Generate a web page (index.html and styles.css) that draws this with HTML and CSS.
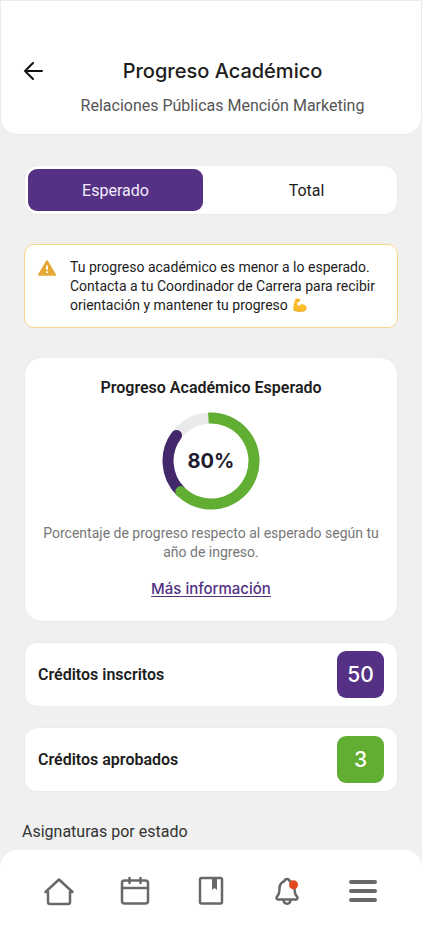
FILE: index.html
```html
<!DOCTYPE html>
<html lang="es">
<head>
<meta charset="utf-8">
<meta name="viewport" content="width=device-width, initial-scale=1">
<title>Progreso Académico</title>
<link rel="stylesheet" href="styles.css">
</head>
<body>
<header class="header">
  <button class="back" type="button" aria-label="Volver">
    <svg width="24" height="24" viewBox="0 0 24 24"><path d="M20 12H3M11 4L3 12l8 8"/></svg>
  </button>
  <h1 class="title">Progreso Académico</h1>
  <p class="subtitle">Relaciones Públicas Mención Marketing</p>
</header>

<main class="content">
  <div class="tabs">
    <button class="tab tab-active" type="button" aria-pressed="true">Esperado</button>
    <button class="tab" type="button" aria-pressed="false">Total</button>
  </div>

  <div class="alert">
    <svg class="alert-icon" width="18" height="16" viewBox="0 0 18 16"><path class="tri" d="M9 1.2 17 14.8H1z"/><path class="mark" d="M9 5.5v4.2M9 11.2v1.8"/></svg>
    <p class="alert-text">Tu progreso académico es menor a lo esperado. Contacta a tu Coordinador de Carrera para recibir orientación y mantener tu progreso
      <svg class="arm" width="14" height="14" viewBox="0 0 28 28"><path fill="#f9bd2c" d="M5 2c3-2 7-1 9 1 1 2 0 4-2 5l-3 .5c-1 3 .5 6 2.500 8 3-4 8-5 12-2.500 4 2.500 5 7 2.500 10-3 3.500-8 3-13 3-5 0-10 0-12-3C-.5 20 2 8 5 2z"/><path fill="none" stroke="#e59a1c" stroke-width="1.500" d="M8 4c2 1 4 1 5-1M11 16.500c0 2 .5 3 2 4M2 24c4 3 18 4 23 0"/></svg></p>
  </div>

  <section class="card">
    <h2 class="card-title">Progreso Académico Esperado</h2>
    <div class="ring">
      <svg width="98" height="98" viewBox="0 0 98 98">
        <circle class="track" cx="49" cy="49" r="43"/>
        <path class="arc arc-enrolled" d="M18.600 79.400A43 43 0 0 1 14.500 23.400"/>
        <path class="arc arc-approved" d="M46.400 6.100A43 43 0 1 1 18.600 79.400"/>
        <circle class="cap" cx="18.600" cy="79.400" r="5.300"/>
      </svg>
      <strong class="percent">80%</strong>
    </div>
    <p class="note">Porcentaje de progreso respecto al esperado según tu año de ingreso.</p>
    <a class="more" href="#">Más información</a>
  </section>

  <div class="credit"><span class="credit-label">Créditos inscritos</span><span class="badge badge-purple">50</span></div>
  <div class="credit"><span class="credit-label">Créditos aprobados</span><span class="badge badge-green">3</span></div>

  <h2 class="section-title">Asignaturas por estado</h2>
</main>

<nav class="nav">
  <a href="#" aria-label="Inicio"><svg width="32" height="32" viewBox="0 0 32 32"><path d="M5 17H2.500L16 4.500 29.500 17H27v10a2 2 0 0 1-2 2H7a2 2 0 0 1-2-2z"/></svg></a>
  <a href="#" aria-label="Calendario"><svg width="32" height="32" viewBox="0 0 32 32"><rect x="3" y="5.500" width="26" height="23" rx="2.500"/><path d="M3 13h26M10.500 3v5M21.500 3v5"/></svg></a>
  <a href="#" aria-label="Cursos"><svg width="32" height="32" viewBox="0 0 32 32"><rect x="5" y="3" width="22" height="25.500" rx="1.500"/><path class="solid" d="M17 3h5v12l-2.500-2-2.500 2z"/></svg></a>
  <a href="#" aria-label="Notificaciones"><svg width="32" height="32" viewBox="0 0 32 32"><path d="M13.500 6a2.600 2.600 0 0 1 5 0C22 7.500 23.500 10 23.500 13.500c0 4 .3 6 2.500 8 1 1.300.5 3-1 3H7c-1.500 0-2-1.700-1-3 2.200-2 2.500-4 2.500-8C8.500 10 10 7.500 13.500 6zM12.500 24.500c0 5.500 7 5.500 7 0"/><circle class="dot" cx="22.500" cy="9.700" r="4.500"/></svg></a>
  <a href="#" aria-label="Menú"><svg width="32" height="32" viewBox="0 0 32 32"><path class="bars" d="M4 7h24M4 16h24M4 25h24"/></svg></a>
</nav>
</body>
</html>
```
FILE: styles.css
```css
* { box-sizing: border-box; }
h1, h2, p { margin: 0; }
button { border: 0; padding: 0; background: none; font: inherit; color: inherit; }

body {
  margin: 0;
  min-height: 100vh;
  display: flex;
  flex-direction: column;
  background: #f0f0f0;
  color: #1d1d1d;
  font-family: Roboto, "Liberation Sans", sans-serif;
  font-size: 16px;
}

.header {
  display: grid;
  grid-template-columns: 24px 1fr;
  row-gap: 9px;
  align-items: center;
  padding: 56px 22px 16px 21px;
  background: #fff;
  border: 1px solid #ebebeb;
  border-radius: 0 0 18px 18px;
  text-align: center;
}
.back { height: 24px; }
.back svg { display: block; fill: none; stroke: #111; stroke-width: 2; stroke-linecap: round; stroke-linejoin: round; }
.title { font: 500 20px/28px Inter, sans-serif; }
.subtitle { grid-column: 2; color: #555; line-height: 24px; }

.content { flex: 1; display: flex; flex-direction: column; padding: 30px 24px 6px; }

.tabs {
  display: grid;
  grid-template-columns: 1fr 1fr;
  column-gap: 16px;
  padding: 3px;
  background: #fff;
  border: 1px solid #ebebeb;
  border-radius: 14px;
}
.tab { height: 42px; border-radius: 9px; }
.tab-active { background: #543185; color: #f2ecfa; }

.alert {
  display: flex;
  gap: 14px;
  margin-top: 29px;
  padding: 13px 16px 12px 13px;
  background: #fff;
  border: 1px solid #fbd58a;
  border-radius: 10px;
}
.alert-icon { flex: none; margin-top: 2px; }
.tri { fill: #e5a835; stroke: #e5a835; stroke-width: 2; stroke-linejoin: round; }
.mark { stroke: #fff; stroke-width: 2; }
.alert-text { font-size: 14px; line-height: 19px; }
.arm { vertical-align: -2px; margin-left: 2px; }

.card {
  display: flex;
  flex-direction: column;
  align-items: center;
  margin-top: 29px;
  padding: 18px 16px 20px;
  background: #fff;
  border: 1px solid #ebebeb;
  border-radius: 18px;
  text-align: center;
}
.card-title { font-size: 16px; font-weight: 600; line-height: 24px; }
.ring { display: grid; place-items: center; margin-top: 12px; }
.ring > * { grid-area: 1 / 1; }
.track, .arc { fill: none; stroke: #eaeaec; stroke-width: 11; }
.arc-enrolled { stroke: #43286b; stroke-linecap: round; }
.arc-approved { stroke: #62ae33; }
.cap { fill: #62ae33; }
.percent { font: 700 20px/28px Inter, sans-serif; color: #1e1b2e; }
.note { margin-top: 14px; font-size: 14px; line-height: 19px; color: #777; }
.more { margin-top: 15px; font: 500 15px/24px Inter, sans-serif; color: #543185; text-decoration-thickness: 1px; text-underline-offset: 2px; }

.credit {
  display: flex;
  align-items: center;
  justify-content: space-between;
  margin-top: 20px;
  padding: 8px 13px;
  background: #fff;
  border: 1px solid #ebebeb;
  border-radius: 13px;
}
.credit-label { font-weight: 600; }
.badge { width: 47px; border-radius: 9px; color: #fff; font: 500 21px/47px Inter, sans-serif; text-align: center; }
.badge-purple { background: #543185; }
.badge-green { background: #62ae33; }

.section-title { margin: 28px -2px 0; font-size: 16px; font-weight: 400; line-height: 24px; color: #333; }

.nav {
  position: sticky;
  bottom: 0;
  display: flex;
  justify-content: space-between;
  padding: 25px 43px 32px;
  background: #fff;
  border-radius: 18px 18px 0 0;
}
.nav svg { display: block; fill: none; stroke: #68686a; stroke-width: 2.500; stroke-linejoin: round; stroke-linecap: round; }
.nav .solid { fill: #68686a; stroke: none; }
.nav .dot { fill: #e3481f; stroke: none; }
.nav .bars { stroke-width: 4; }
```
